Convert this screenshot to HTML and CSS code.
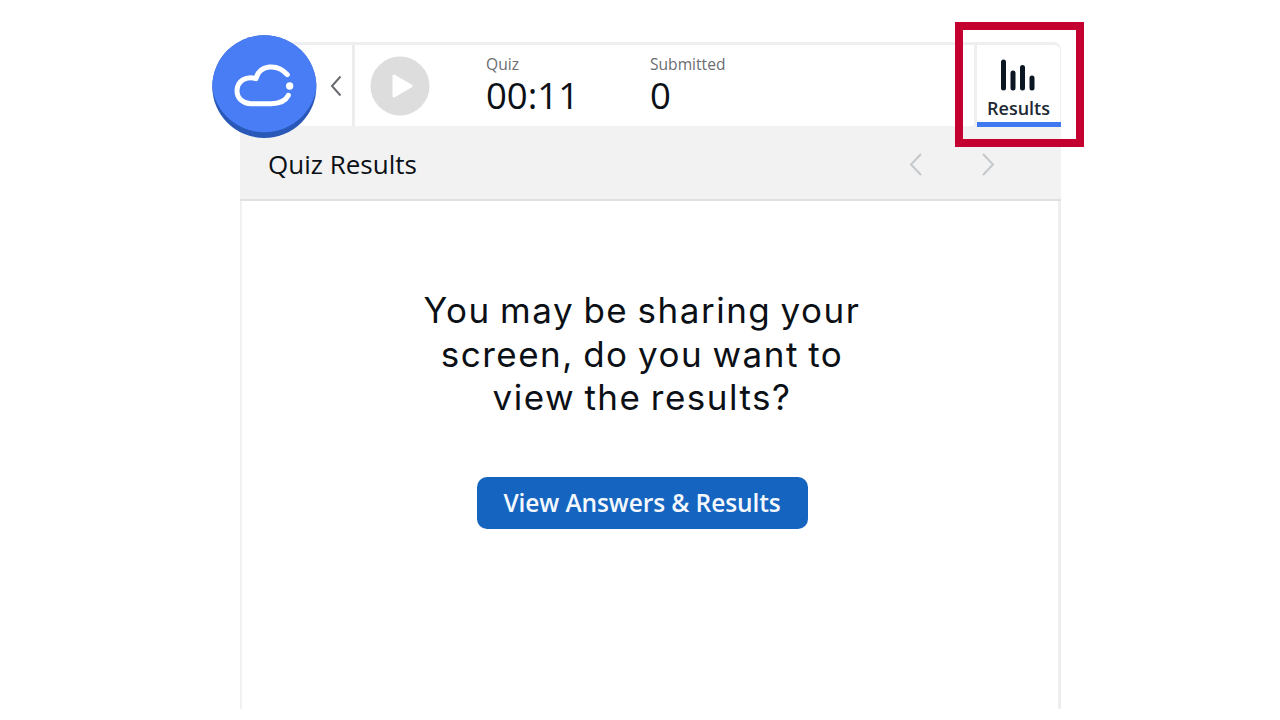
FILE: index.html
```html
<!DOCTYPE html>
<html lang="en">
<head>
    <meta charset="UTF-8">
    <meta name="viewport" content="width=device-width, initial-scale=1.0">
    <title>Quiz Results</title>
    <link rel="stylesheet" href="styles.css">
</head>
<body>
    <div class="panel">
        <div class="toolbar">
            <button class="collapse" aria-label="Collapse">
                <svg width="12" height="22" viewBox="0 0 12 22"><path d="M10.5 1.5L2 11l8.5 9.5"/></svg>
            </button>
            <button class="play" aria-label="Play">
                <svg width="60" height="60" viewBox="0 0 60 60">
                    <circle cx="30" cy="30" r="29.5"/>
                    <path d="M24 20v20l17-10z"/>
                </svg>
            </button>
            <div class="stat quiz-time">
                <span class="label">Quiz</span>
                <span class="value">00:11</span>
            </div>
            <div class="stat">
                <span class="label">Submitted</span>
                <span class="value">0</span>
            </div>
            <div class="tab">
                <svg width="36" height="32" viewBox="0 0 36 32">
                    <path d="M2.5 3v26M12 14v15M21.5 8.500v20.500M31 19v10"/>
                </svg>
                <span>Results</span>
                <div class="highlight"></div>
            </div>
        </div>
        <div class="subheader">
            <h1>Quiz Results</h1>
            <div class="pager">
                <svg width="14" height="25" viewBox="0 0 14 25"><path d="M12 2L2 12.5L12 23"/></svg>
                <svg width="14" height="25" viewBox="0 0 14 25"><path d="M2 2l10 10.5L2 23"/></svg>
            </div>
        </div>
        <div class="content">
            <p class="message">You may be sharing your<br>screen, do you want to<br>view the results?</p>
            <button class="view-button">View Answers &amp; Results</button>
        </div>
        <svg class="logo" width="108" height="106" viewBox="30 24 324 318">
            <defs>
                <clipPath id="disc"><ellipse cx="193" cy="185" rx="156" ry="154"/></clipPath>
            </defs>
            <ellipse cx="193" cy="185" rx="156" ry="154" fill="#2958b8"/>
            <circle cx="193" cy="163" r="159" fill="#487df5" clip-path="url(#disc)"/>
            <path class="cloud" d="M262 149C232 114 178 119 168 161C138 151 111 169 111 198C111 220 130 236 153 236H213C237 236 257 227 265 211"/>
            <circle cx="269" cy="183" r="11" fill="#fff"/>
        </svg>
    </div>
</body>
</html>
```

FILE: styles.css
```css
* {
    box-sizing: border-box;
}
body {
    margin: 0;
    height: 720px;
    overflow: hidden;
    background-color: #fff;
    color: #0b1016;
    font-family: "Open Sans", sans-serif;
}
button {
    border: 0;
    padding: 0;
    background: none;
    font-family: inherit;
}
svg {
    display: block;
    fill: none;
}
.panel {
    position: relative;
    display: flex;
    flex-direction: column;
    width: 821px;
    height: 667px;
    margin: 42px 0 0 240px;
}
/* top bar */
.toolbar {
    display: flex;
    height: 84px;
    border-top: 3px solid #eeeff0;
    border-right: 1px solid #eeeff0;
    border-top-right-radius: 8px;
}
.collapse {
    display: flex;
    justify-content: flex-end;
    align-items: center;
    width: 115px;
    padding-right: 10px;
    border-right: 3px solid #ededee;
}
.collapse path {
    stroke: #686c70;
    stroke-width: 2;
}
.play {
    margin-left: 15px;
}
.play circle {
    fill: #ddd;
}
.play path {
    fill: #fff;
    stroke: #fff;
    stroke-width: 3;
    stroke-linejoin: round;
}
.stat {
    display: flex;
    flex-direction: column;
    padding-top: 8px;
}
.quiz-time {
    width: 164px;
    margin-left: 56px;
}
.label {
    color: #6b6d70;
    font-size: 15.6px;
    line-height: 22px;
}
.value {
    font-size: 36.5px;
    line-height: 40px;
}
.tab {
    position: relative;
    display: flex;
    flex-direction: column;
    align-items: center;
    width: 86px;
    margin-left: auto;
    padding-top: 14px;
    border-left: 3px solid #eeeff0;
}
.tab path {
    stroke: #0b1623;
    stroke-width: 5;
    stroke-linecap: round;
}
.tab span {
    margin-top: 4px;
    color: #202833;
    font-size: 18px;
    font-weight: 600;
    line-height: 26px;
}
.tab::after {
    content: "";
    position: absolute;
    left: 0;
    right: -1px;
    bottom: -1px;
    height: 5px;
    background-color: #4078f2;
}
/* red frame around the tab */
.highlight {
    position: absolute;
    top: -23px;
    left: -22px;
    width: 129px;
    height: 125px;
    border: 8px solid #c3002f;
}
.subheader {
    display: flex;
    justify-content: space-between;
    align-items: center;
    height: 75px;
    padding: 4px 66px 0 28px;
    border-bottom: 2px solid #dfe0e1;
    background-color: #f2f2f2;
}
.subheader h1 {
    margin: 0 0 2px;
    font-size: 26px;
    font-weight: 400;
}
.pager {
    display: flex;
    gap: 58px;
}
.pager path {
    stroke: #c5c8cb;
    stroke-width: 2;
}
.content {
    display: flex;
    flex: 1;
    flex-direction: column;
    align-items: center;
    padding-top: 88px;
    border-left: 2px solid #f1f1f1;
    border-right: 3px solid #edeeef;
}
.message {
    margin: 0 16px 0 0;
    font-family: Inter, sans-serif;
    font-size: 35px;
    letter-spacing: 1.5px;
    word-spacing: -2px;
    line-height: 43.5px;
    text-align: center;
}
.view-button {
    width: 331px;
    height: 52px;
    margin: 57.5px 16px 0 0;
    padding-bottom: 1px;
    border-radius: 10px;
    background-color: #1565c0;
    color: #f4f8fd;
    font-size: 24.5px;
    font-weight: 600;
    letter-spacing: -0.1px;
}
.logo {
    position: absolute;
    top: -9px;
    left: -30px;
}
.cloud {
    stroke: #fff;
    stroke-width: 15;
    stroke-linecap: round;
    stroke-linejoin: round;
}
```
